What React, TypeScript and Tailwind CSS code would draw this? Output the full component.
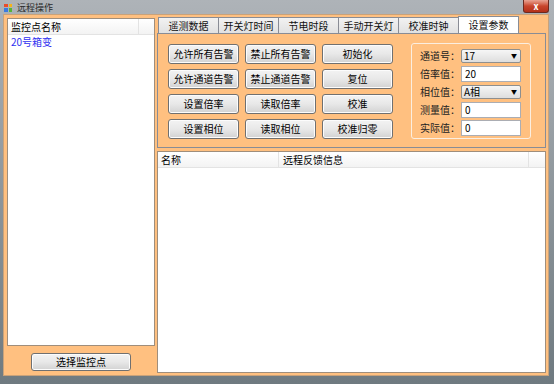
import React from 'react';

const font = { fontFamily: '"Noto Sans CJK SC", "Microsoft YaHei", sans-serif' };

function Btn({ label, className = '' }: { label: string; className?: string }) {
  return (
    <div
      className={`flex items-center justify-center rounded-[3px] border border-[#707070] bg-gradient-to-b from-[#f3f3f3] via-[#e8e8e8] to-[#d2d2d2] text-[10px] leading-none text-black shadow-[inset_0_0_0_1px_#fcfcfc] ${className}`}
    >
      {label}
    </div>
  );
}

function Field({ label, value, combo }: { label: string; value: string; combo?: boolean }) {
  return (
    <div className="flex h-[16px] items-center">
      <div className="w-[49px] pr-[1px] text-right text-[10px] leading-none text-[#222]">{label}</div>
      {combo ? (
        <div className="flex h-[14px] w-[60px] items-center justify-between rounded-[2px] border border-[#8e8f8f] bg-gradient-to-b from-[#f6f6f6] to-[#dedede] pl-[2px] pr-[3px] text-[10px] leading-none">
          <span>{value}</span>
          <span className="text-[6px]">▼</span>
        </div>
      ) : (
        <div className="flex h-[16px] w-[60px] items-center border border-[#abadb3] bg-white pl-[3px] text-[10px] leading-none">
          {value}
        </div>
      )}
    </div>
  );
}

const tabs = ['遥测数据', '开关灯时间', '节电时段', '手动开关灯', '校准时钟', '设置参数'];
const buttons = [
  '允许所有告警', '禁止所有告警', '初始化',
  '允许通道告警', '禁止通道告警', '复位',
  '设置倍率', '读取倍率', '校准',
  '设置相位', '读取相位', '校准归零',
];

export default function App() {
  return (
    <div
      className="relative flex h-[384px] w-[554px] flex-col overflow-hidden bg-gradient-to-b from-[#aeb3b8] to-[#6f7a80]"
      style={font}
    >
      {/* title bar */}
      <div className="relative flex h-[15px] items-center pl-[4px]">
        <div className="grid h-[8px] w-[8px] grid-cols-2 gap-px">
          <span className="bg-[#e84c2c]" />
          <span className="bg-[#f4b41a]" />
          <span className="bg-[#3a7be0]" />
          <span className="bg-[#58b336]" />
        </div>
        <span className="ml-[5px] text-[9px] leading-none text-[#2a2a2a]">远程操作</span>
        <div className="absolute right-[5px] top-0 flex h-[13px] w-[26px] items-center justify-center rounded-b-[3px] border border-t-0 border-[#6b2a20] bg-gradient-to-b from-[#e8a393] via-[#c8452c] to-[#b3301a] text-[9px] font-bold leading-none text-white">
          x
        </div>
      </div>

      <div className="flex flex-1 pb-[9px] pl-[4px] pr-[6px]">
        <div className="flex flex-1 bg-[#ffc080] shadow-[0_0_0_1px_#c9a27a]">
          {/* left column */}
          <div className="flex w-[153px] flex-col pl-[3px] pt-[3px]">
            <div className="h-[328px] w-[148px] border border-[#9f8e7c] bg-white">
              <div className="flex h-[16px] border-b border-[#e3e3e3] bg-gradient-to-b from-white to-[#f3f3f3] text-[10px] leading-none">
                <div className="flex w-[131px] items-center border-r border-[#e3e3e3] pl-[3px]">监控点名称</div>
                <div className="flex-1" />
              </div>
              <div className="pl-[3px] pt-[1px] text-[10px] leading-[12px] text-[#3030f0]">20号箱变</div>
            </div>
            <Btn label="选择监控点" className="ml-[24px] mt-[7px] h-[18px] w-[100px]" />
          </div>

          {/* right column */}
          <div className="flex w-[391px] flex-col pt-[2px]">
            <div className="flex h-[16px] items-end pl-[1px]">
              {tabs.map((t, i) => (
                <div
                  key={t}
                  className={`flex w-[61px] items-center justify-center border border-b-0 border-[#898c95] text-[10px] leading-none text-[#111] ${
                    i === 5
                      ? 'h-[17px] bg-white'
                      : '-mr-px h-[16px] bg-gradient-to-b from-[#f2f2f2] to-[#e1e1e1]'
                  }`}
                >
                  {t}
                </div>
              ))}
            </div>
            <div className="relative flex h-[115px] w-[389px] border border-[#898c95] bg-[#ffc080]">
              <div className="ml-[10px] mt-[10px] grid grid-cols-[71px_71px_71px] gap-x-[6px] gap-y-[5px] self-start">
                {buttons.map((b) => (
                  <Btn key={b} label={b} className="h-[20px]" />
                ))}
              </div>
              <div className="ml-[18px] mt-[9px] flex h-[96px] w-[120px] flex-col gap-[2px] rounded-[3px] border border-[#fbeee0] pt-[4px]">
                <Field label="通道号：" value="17" combo />
                <Field label="倍率值：" value="20" />
                <Field label="相位值：" value="A相" combo />
                <Field label="测量值：" value="0" />
                <Field label="实际值：" value="0" />
              </div>
            </div>
            <div className="mt-[3px] h-[222px] w-[389px] border border-[#9f8e7c] bg-white">
              <div className="flex h-[16px] border-b border-[#e3e3e3] bg-gradient-to-b from-white to-[#f3f3f3] text-[10px] leading-none">
                <div className="flex w-[121px] items-center border-r border-[#e3e3e3] pl-[3px]">名称</div>
                <div className="flex w-[250px] items-center border-r border-[#e3e3e3] pl-[4px]">远程反馈信息</div>
                <div className="flex-1" />
              </div>
            </div>
          </div>
        </div>
      </div>
    </div>
  );
}
